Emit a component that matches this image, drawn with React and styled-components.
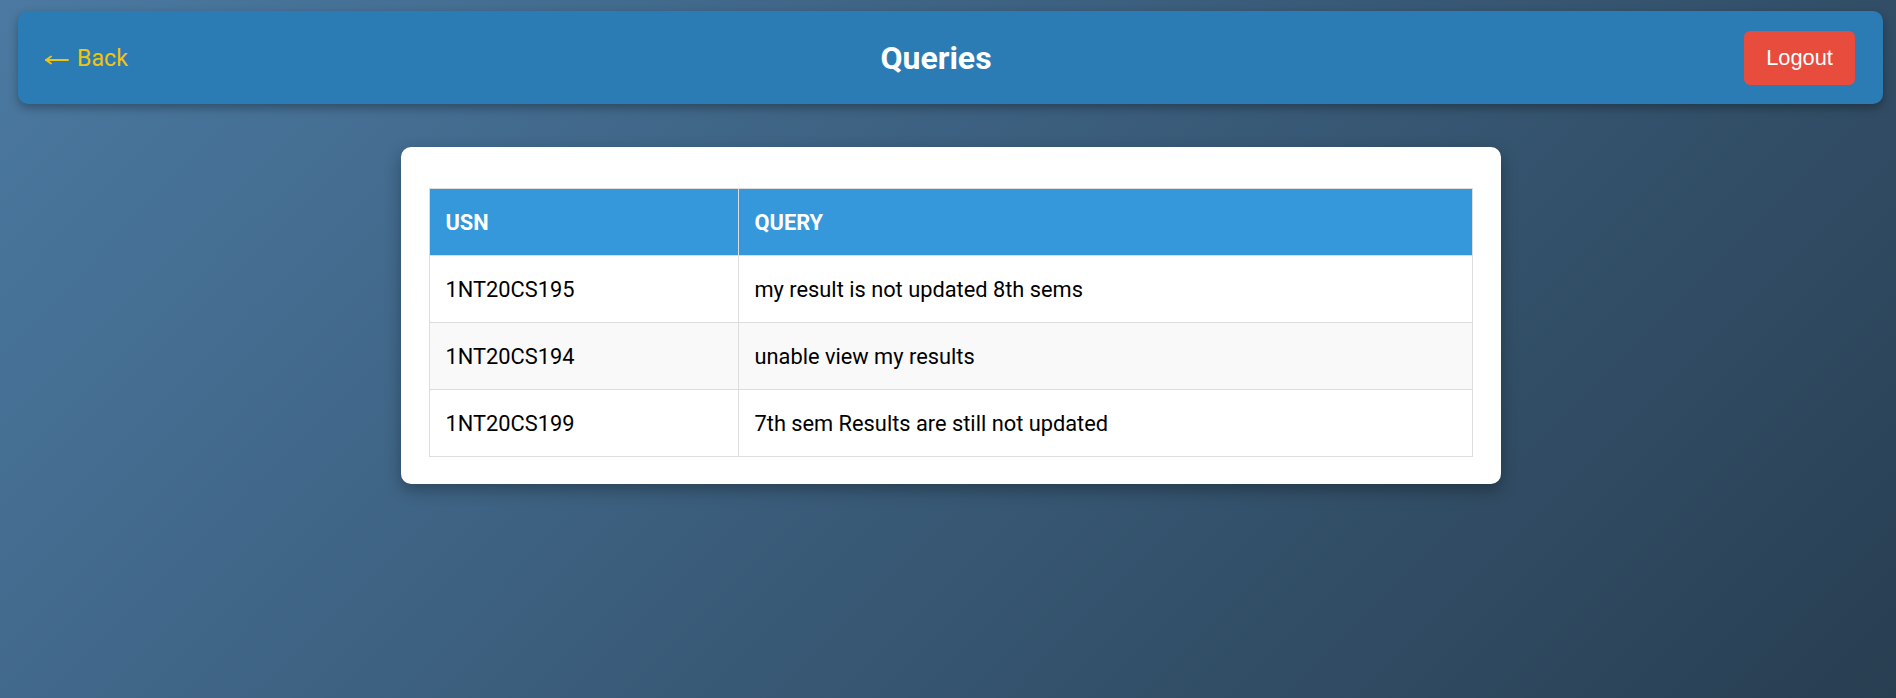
import React from "react";
import styled, { createGlobalStyle } from "styled-components";

const GlobalStyle = createGlobalStyle`
  html, body {
    margin: 0;
    padding: 0;
  }
  body {
    min-height: 100vh;
    background: linear-gradient(135deg, #4b79a1 0%, #283e51 100%);
    background-attachment: fixed;
    font-family: Roboto, "Liberation Sans", Arial, sans-serif;
  }
  #root {
    min-height: 100vh;
  }
`;

const Page = styled.div`
  min-height: 100vh;
  padding: 11px 13px 0 18px;
  box-sizing: border-box;
`;

const Header = styled.header`
  display: flex;
  align-items: center;
  justify-content: space-between;
  height: 93px;
  box-sizing: border-box;
  padding: 0 28px 0 27px;
  background: #2b7cb4;
  border-radius: 10px;
  box-shadow: 0 4px 10px rgba(0, 0, 0, 0.3);
`;

const BackLink = styled.a`
  color: #f1c40f;
  font-family: Roboto, sans-serif;
  font-size: 23.2px;
  text-decoration: none;
  cursor: pointer;
  white-space: nowrap;
`;

const ArrowIcon = styled.svg`
  width: 24px;
  height: 12px;
  margin-right: 8px;
  vertical-align: baseline;
`;

const Title = styled.h1`
  margin: 0;
  color: #ffffff;
  font-family: Roboto, sans-serif;
  font-weight: 700;
  font-size: 32px;
`;

const LogoutButton = styled.button`
  width: 111px;
  height: 54px;
  border: none;
  border-radius: 6px;
  background: #e74c3c;
  color: #ffffff;
  font-family: "Liberation Sans", Arial, sans-serif;
  font-size: 21.8px;
  cursor: pointer;
`;

const Main = styled.main`
  display: flex;
  justify-content: center;
  padding-top: 43px;
`;

const Card = styled.section`
  width: 1100px;
  box-sizing: border-box;
  padding: 41px 28px 27px;
  background: #ffffff;
  border-radius: 10px;
  box-shadow: 0 6px 16px rgba(0, 0, 0, 0.3);
`;

const Table = styled.table`
  width: 100%;
  border-collapse: collapse;
  table-layout: fixed;
  font-family: Roboto, sans-serif;
  font-size: 21.8px;
`;

const HeadCell = styled.th`
  height: 67px;
  box-sizing: border-box;
  padding: 0 16px;
  text-align: left;
  background: #3498db;
  color: #ffffff;
  font-weight: 700;
  text-transform: uppercase;
  border: 1px solid #dddddd;
  width: ${(p) => p.$width || "auto"};
`;

const Row = styled.tr`
  background: ${(p) => (p.$striped ? "#f9f9f9" : "#ffffff")};
`;

const Cell = styled.td`
  height: 67px;
  box-sizing: border-box;
  padding: 0 16px;
  color: #000000;
  border: 1px solid #dddddd;
`;

const queries = [
  { usn: "1NT20CS195", query: "my result is not updated 8th sems" },
  { usn: "1NT20CS194", query: "unable view my results" },
  { usn: "1NT20CS199", query: "7th sem Results are still not updated" },
];

export default function App() {
  return (
    <>
      <GlobalStyle />
      <Page>
        <Header>
          <BackLink>
            <ArrowIcon viewBox="0 0 24 12" fill="none" stroke="currentColor" strokeWidth="1.8" strokeLinecap="round" strokeLinejoin="round" aria-hidden="true">
              <path d="M1 6H23" />
              <path d="M6 2.5L1 6L6 9.5" />
            </ArrowIcon>
            Back
          </BackLink>
          <Title>Queries</Title>
          <LogoutButton>Logout</LogoutButton>
        </Header>
        <Main>
          <Card>
            <Table>
              <thead>
                <tr>
                  <HeadCell $width="309px">USN</HeadCell>
                  <HeadCell>Query</HeadCell>
                </tr>
              </thead>
              <tbody>
                {queries.map((q, i) => (
                  <Row key={q.usn} $striped={i % 2 === 1}>
                    <Cell>{q.usn}</Cell>
                    <Cell>{q.query}</Cell>
                  </Row>
                ))}
              </tbody>
            </Table>
          </Card>
        </Main>
      </Page>
    </>
  );
}
